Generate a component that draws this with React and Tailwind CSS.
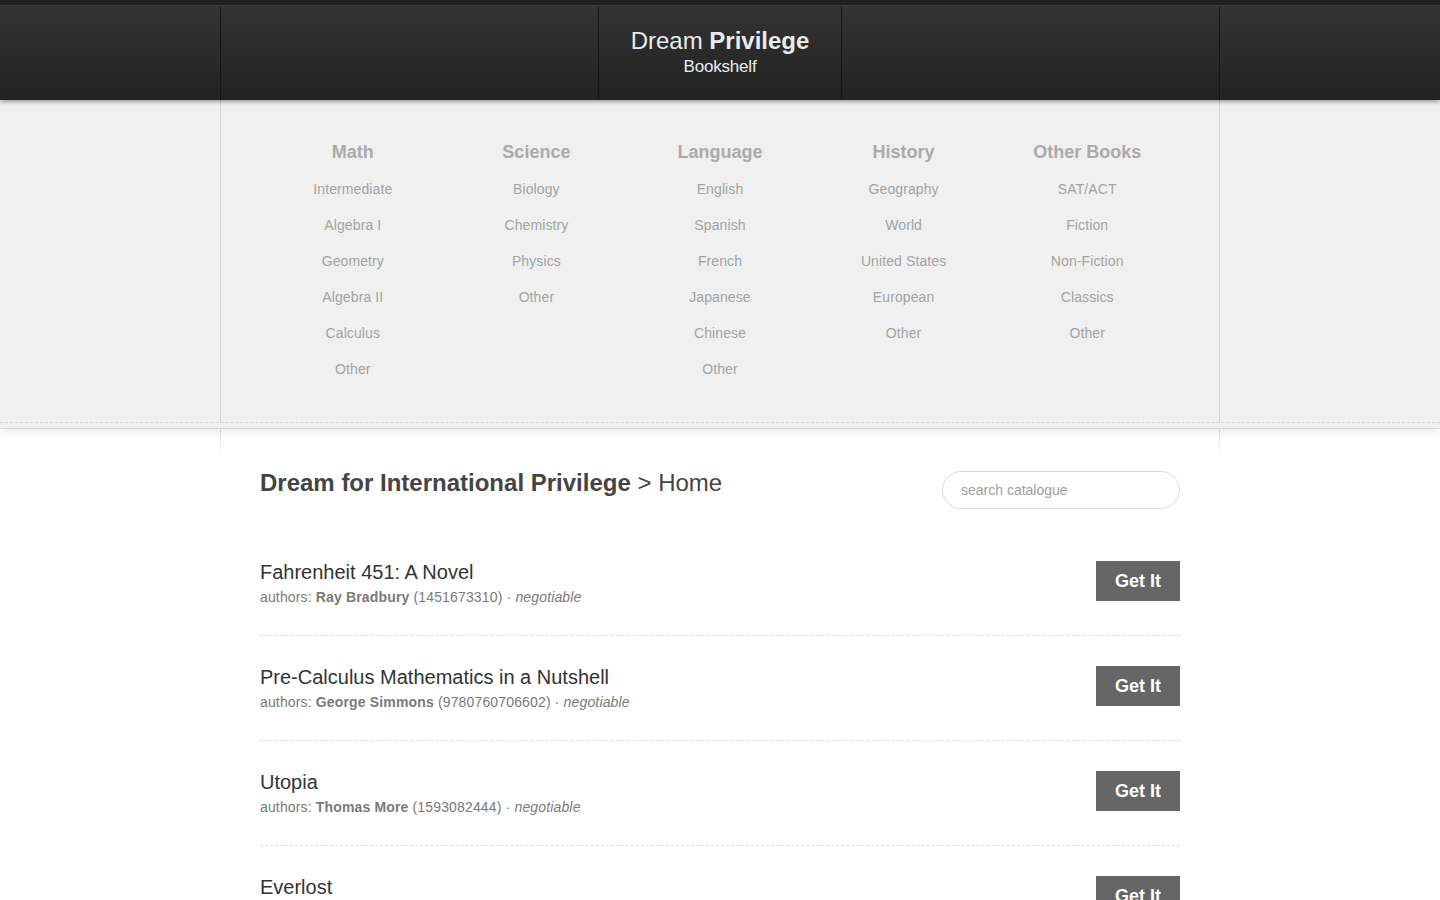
import React from "react";

const cols = [
  { h: "Math", items: ["Intermediate", "Algebra I", "Geometry", "Algebra II", "Calculus", "Other"] },
  { h: "Science", items: ["Biology", "Chemistry", "Physics", "Other"] },
  { h: "Language", items: ["English", "Spanish", "French", "Japanese", "Chinese", "Other"] },
  { h: "History", items: ["Geography", "World", "United States", "European", "Other"] },
  { h: "Other Books", items: ["SAT/ACT", "Fiction", "Non-Fiction", "Classics", "Other"] },
];

const books = [
  { t: "Fahrenheit 451: A Novel", a: "Ray Bradbury", isbn: "1451673310" },
  { t: "Pre-Calculus Mathematics in a Nutshell", a: "George Simmons", isbn: "9780760706602" },
  { t: "Utopia", a: "Thomas More", isbn: "1593082444" },
  { t: "Everlost", a: "Neal Shusterman", isbn: "1416997490" },
];

export default function App() {
  return (
    <div className="min-h-screen bg-white" style={{ fontFamily: '"Liberation Sans", Arial, sans-serif' }}>
      {/* Header */}
      <header className="relative z-20 bg-[#1f1f1f] pt-[5px] shadow-[0_2px_4px_rgba(0,0,0,0.35)]">
        <div className="border-t border-[#3c3c3c] bg-gradient-to-b from-[#333333] to-[#222222]">
          <div className="mx-auto flex h-[94px] w-[1000px] border-x border-[#161616]">
            <div className="flex-1 border-r border-[#161616]" />
            <div className="flex w-[243px] flex-col items-center justify-center border-r border-[#161616] pb-[1px]">
              <div className="text-[24px] leading-[26px] text-[#e8ecef]">
                Dream <span className="font-bold">Privilege</span>
              </div>
              <div className="mt-[2px] text-[17px] leading-[22px] text-[#e8ecef] tracking-[-0.2px]">Bookshelf</div>
            </div>
            <div className="flex-1" />
          </div>
        </div>
      </header>

      {/* Category nav */}
      <nav className="relative z-10 bg-[#f0f0f0] shadow-[0_3px_8px_rgba(0,0,0,0.08)]">
        <div className="mx-auto w-[1000px] border-x border-[#d4d4d4] px-[40px] pt-[41px] pb-[35px]">
          <div className="grid grid-cols-5">
            {cols.map((c) => (
              <div key={c.h} className="flex flex-col items-center">
                <div className="text-[18px] leading-[22px] font-bold text-[#aaaaaa] mb-[8px]">{c.h}</div>
                {c.items.map((i, k) => (
                  <div key={k} className="h-[36px] leading-[36px] text-[14px] text-[#a3a3a3] tracking-[0.1px]">
                    {i}
                  </div>
                ))}
              </div>
            ))}
          </div>
        </div>
        <div className="border-t border-dashed border-[#d6d6d6]" />
        <div className="h-[5px]" />
        <div className="border-t border-[#d6d6d6]" />
      </nav>

      <main className="relative">
        <div className="relative mx-auto w-[1000px]">
          <div className="absolute left-0 top-0 h-[27px] w-px bg-gradient-to-b from-[#d8d8d8] to-transparent" />
          <div className="absolute right-0 top-0 h-[27px] w-px bg-gradient-to-b from-[#d8d8d8] to-transparent" />
        </div>
        <div className="mx-auto w-[920px]">
          <div className="flex items-start justify-between pt-[40px] pb-[22px]">
            <h1 className="text-[24px] leading-[28px] text-[#444444]">
              <span className="font-bold">Dream for International Privilege</span> &gt; Home
            </h1>
            <div className="mt-[2px] flex h-[38px] w-[238px] items-center rounded-full border border-[#dadada] px-[18px] text-[14px] text-[#a0a0a0]">
              search catalogue
            </div>
          </div>

          {books.map((b, idx) => (
            <div key={idx} className="border-b border-dashed border-[#dcdcdc] pt-[29px] pb-[28px]">
              <div className="flex items-start justify-between">
                <div>
                  <div className="text-[20px] leading-[24px] text-[#333333]">{b.t}</div>
                  <div className="mt-[3px] text-[14px] leading-[20px] text-[#7a7a7a] tracking-[0.15px]">
                    authors: <span className="font-bold">{b.a}</span> ({b.isbn}) · <span className="italic">negotiable</span>
                  </div>
                </div>
                <div className="mt-[1px] flex h-[40px] w-[84px] items-center justify-center bg-[#666666] text-[18px] font-bold text-white">
                  Get It
                </div>
              </div>
            </div>
          ))}
        </div>
      </main>
    </div>
  );
}
